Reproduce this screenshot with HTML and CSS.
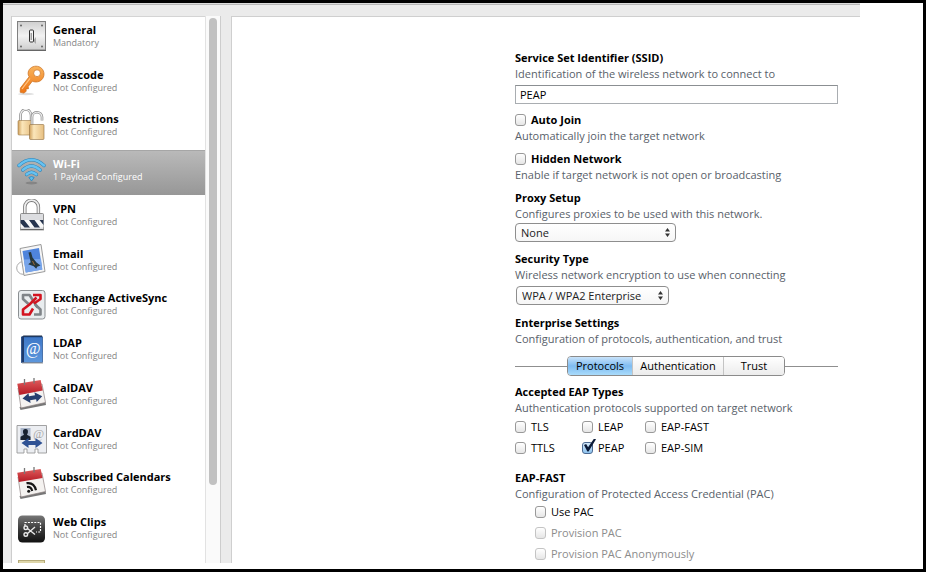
FILE: index.html
```html
<!DOCTYPE html>
<html lang="en">
<head>
<meta charset="utf-8">
<title>Wi-Fi Payload</title>
<link rel="stylesheet" href="styles.css">
</head>
<body>
<div class="window">
  <nav class="sidebar" aria-label="Payloads">
    <ul class="payloads">
      <li class="payload">
        <svg class="icon" viewBox="0 0 32 32" aria-hidden="true">
          <defs>
            <linearGradient id="steel" x1="0" y1="0" x2="0" y2="1"><stop offset="0" stop-color="#cfcfcf"/><stop offset=".5" stop-color="#f2f2f2"/><stop offset="1" stop-color="#cdcdcd"/></linearGradient>
            <linearGradient id="orange" x1="0" y1="0" x2="0" y2="1"><stop offset="0" stop-color="#f9b45c"/><stop offset="1" stop-color="#ee7414"/></linearGradient>
            <linearGradient id="brass" x1="0" y1="0" x2="1" y2="0"><stop offset="0" stop-color="#cfa05c"/><stop offset=".3" stop-color="#fbe6ba"/><stop offset="1" stop-color="#e6be80"/></linearGradient>
            <linearGradient id="red" x1="0" y1="0" x2="0" y2="1"><stop offset="0" stop-color="#de5a5a"/><stop offset="1" stop-color="#b51a25"/></linearGradient>
            <linearGradient id="book" x1="0" y1="0" x2="0" y2="1"><stop offset="0" stop-color="#3e78c8"/><stop offset="1" stop-color="#5d97dc"/></linearGradient>
            <linearGradient id="coal" x1="0" y1="0" x2="0" y2="1"><stop offset="0" stop-color="#777"/><stop offset=".5" stop-color="#3a3a3a"/><stop offset="1" stop-color="#111"/></linearGradient>
          </defs>
          <rect x="1.5" y="1.5" width="28" height="28.500" fill="url(#steel)" stroke="#808080"/>
          <path d="M1 30.500h29" stroke="#666"/>
          <g fill="#666"><circle cx="5" cy="5.500" r="1"/><circle cx="26" cy="5.500" r="1"/><circle cx="5" cy="26.500" r="1"/><circle cx="26" cy="26.500" r="1"/></g>
          <path d="M17 21l3 3v-7z" fill="#aaa"/>
          <rect x="13.500" y="10" width="4" height="12" rx="1" fill="#f4f4f4" stroke="#333"/>
          <path d="M15.200 13v7" stroke="#777"/>
        </svg>
        <span class="text"><b>General</b><small>Mandatory</small></span>
      </li>
      <li class="payload">
        <svg class="icon" viewBox="0 0 32 32" aria-hidden="true">
          <ellipse cx="10" cy="29" rx="8" ry="1.200" fill="#ddd"/>
          <path fill-rule="evenodd" d="M20 1.200c4.500 0 8 3.300 8 7.800s-3.500 8-8 8c-1.500 0-2.700-.3-3.700-.8l-4.100 5.300.3 2.200-2.500.2.200 2.400-2.300 1.800-3.700-.8.200-4.300 8.700-11.200c-.7-1.200-1-2.200-1-3.300 0-4.200 3.600-7.300 7.900-7.300zm1 3.600a3.400 3.400 0 1 0 .1 6.800 3.400 3.400 0 0 0-.1-6.800z" fill="url(#orange)" stroke="#c96b1a" stroke-width=".7"/>
          <path d="M6 24l8-10.500" stroke="#ffc68a" stroke-width="1.200"/>
        </svg>
        <span class="text"><b>Passcode</b><small>Not Configured</small></span>
      </li>
      <li class="payload">
        <svg class="icon" viewBox="0 0 32 32" aria-hidden="true">
          <path d="M4.500 12V6.500a5.300 6 0 0 1 10.600 0V12" fill="none" stroke="#8a8a8a" stroke-width="2.600"/>
          <path d="M4.500 12V6.500a5.300 6 0 0 1 10.600 0V12" fill="none" stroke="#eee" stroke-width="1.200"/>
          <rect x="2" y="11.500" width="14" height="14.500" rx="1" fill="url(#brass)" stroke="#9c7a48" stroke-width=".6"/>
          <path d="M16 16V8.500a5 5 0 0 1 10-.5v3.500" fill="none" stroke="#8a8a8a" stroke-width="2.600"/>
          <path d="M16 16V8.500a5 5 0 0 1 10-.5v3.500" fill="none" stroke="#eee" stroke-width="1.200"/>
          <rect x="13.500" y="15.500" width="14.500" height="15" rx="1" fill="url(#brass)" stroke="#8d6c3e" stroke-width=".6"/>
        </svg>
        <span class="text"><b>Restrictions</b><small>Not Configured</small></span>
      </li>
      <li class="payload selected" aria-current="true">
        <svg class="icon" viewBox="0 0 32 32" aria-hidden="true">
          <ellipse cx="15.500" cy="29" rx="6" ry="1.500" fill="#858585"/>
          <g fill="none" stroke="#2a83b8" stroke-width="3.400" stroke-linecap="round"><path d="M3 11.500Q15.500 0 28 11.500"/><path d="M6.800 16Q15.500 8 24.200 16"/><path d="M10.600 20.500Q15.500 16 20.400 20.500"/></g>
          <g fill="none" stroke="#66c2f2" stroke-width="2.400" stroke-linecap="round"><path d="M3 11.500Q15.500 0 28 11.500"/><path d="M6.800 16Q15.500 8 24.200 16"/><path d="M10.600 20.500Q15.500 16 20.400 20.500"/></g>
          <path d="M12.800 23.500Q15.500 21.500 18.200 23.500L15.500 27z" fill="#5cbdf0" stroke="#2a83b8" stroke-width=".8"/>
        </svg>
        <span class="text"><b>Wi-Fi</b><small>1 Payload Configured</small></span>
      </li>
      <li class="payload">
        <svg class="icon" viewBox="0 0 32 32" aria-hidden="true">
          <path d="M8.800 15V8a6.800 6.800 0 0 1 13.600 0v7" fill="none" stroke="#777" stroke-width="3.400"/>
          <path d="M8.800 15V8a6.800 6.800 0 0 1 13.600 0v7" fill="none" stroke="#eee" stroke-width="1.800"/>
          <rect x="4.500" y="14.500" width="23" height="16" rx="1" fill="#dcdde0" stroke="#777" stroke-width=".8"/>
          <rect x="4.500" y="21" width="23" height="7.500" fill="#f8f8f8"/>
          <path d="M4.500 21h3.500l6 7.500H8.500l-4-4.500zM13 21h5.500l5.500 7.500h-5.500zM23.500 21h4v5z" fill="#26344e"/>
          <path d="M4 30.800h24" stroke="#444" stroke-width=".8"/>
        </svg>
        <span class="text"><b>VPN</b><small>Not Configured</small></span>
      </li>
      <li class="payload">
        <svg class="icon" viewBox="0 0 32 32" aria-hidden="true">
          <circle cx="7" cy="24" r="6.300" fill="none" stroke="#aaa"/>
          <path d="M4 4.500L25 .5 29 27.500 8 31.500z" fill="#f6f6f6" stroke="#9a9a9a"/>
          <path d="M6.500 7L23 4l3.300 21.500L9.800 28.500z" fill="#4f84dc"/>
          <path d="M7.800 15.500L25 15l1.300 10.500L9.800 28.500z" fill="#78a5ea"/>
          <path d="M12.500 8.500l2.500-.5 1.500 5.500 4 5 4 3-3.300 1.200-1 2-2.500-2.500-5.500-2 2.500-2z" fill="#26373c"/>
          <path d="M16.500 17l2 4" stroke="#a06a35"/>
        </svg>
        <span class="text"><b>Email</b><small>Not Configured</small></span>
      </li>
      <li class="payload">
        <svg class="icon" viewBox="0 0 32 32" aria-hidden="true">
          <rect x="2.500" y="2.500" width="26.500" height="28.500" rx="2.500" fill="#e9edef" stroke="#8b8f92"/>
          <g fill="none" stroke-width="2.600" stroke-linejoin="round">
            <path d="M12.500 16L7 11V7h6.500l8 12.500" stroke="#7f8488"/>
            <path d="M19 16.500l5.500 5v5H18" stroke="#7f8488"/>
            <path d="M17 7h7.500v4L18 15.500" stroke="#d31420"/>
            <path d="M20.500 9.500l-7 7-6.500 5v5h6.500l3.500-6" stroke="#d31420"/>
          </g>
        </svg>
        <span class="text"><b>Exchange ActiveSync</b><small>Not Configured</small></span>
      </li>
      <li class="payload">
        <svg class="icon" viewBox="0 0 32 32" aria-hidden="true">
          <path d="M5.500 4l2-1.500h18.500l.5 2z" fill="#1d2d48"/>
          <rect x="5.500" y="4" width="21" height="25.500" fill="url(#book)" stroke="#24508f" stroke-width=".7"/>
          <rect x="5.500" y="4" width="2.500" height="25.500" fill="#1e3b6d"/>
          <path d="M6 30h21" stroke="#999"/>
          <text class="at" x="17" y="21" text-anchor="middle" font-size="16" fill="#fff">@</text>
        </svg>
        <span class="text"><b>LDAP</b><small>Not Configured</small></span>
      </li>
      <li class="payload">
        <svg class="icon" viewBox="0 0 32 32" aria-hidden="true">
          <path d="M3.500 29l26-5 .5 3-25.500 5z" fill="#777"/>
          <path d="M2 10l24-4 3.500 18.500L5 30z" fill="#f4f2f0" stroke="#8b8080" stroke-width=".7"/>
          <path d="M1.300 5.800L24.700 2l2 10.500L3.300 17z" fill="url(#red)"/>
          <path d="M8.500 1v6M18 0v5.500" stroke="#777" stroke-width="1.300"/>
          <path d="M6.500 20.500l6-5.300.5 3 6-1-.6-3 7.800 4-5.500 5.800-.6-2.800-6 1 .5 2.900z" fill="#263f6f"/>
        </svg>
        <span class="text"><b>CalDAV</b><small>Not Configured</small></span>
      </li>
      <li class="payload">
        <svg class="icon" viewBox="0 0 32 32" aria-hidden="true">
          <path d="M1 2.500h29.500V30H22v-4h-3v4h-8v-4H8v4H1z" fill="#eceef2" stroke="#999" stroke-width=".9"/>
          <rect x="4.500" y="5" width="10" height="12" fill="#aab6ca"/>
          <path d="M9.500 6c2 0 2.600 1.300 2.400 3-.1 1.400-.6 2-.9 2.700l3.500 2V17h-10v-3.300l3.500-2c-.4-.8-.9-1.300-1-2.700-.1-1.700.5-3 2.500-3z" fill="#16202f"/>
          <text class="at" x="22.500" y="14.500" text-anchor="middle" font-size="12" fill="#a8a8a8">@</text>
          <path d="M5.500 20l7-5v3h7v-3l7 5-7 5v-3h-7v3z" fill="#2f5294"/>
        </svg>
        <span class="text"><b>CardDAV</b><small>Not Configured</small></span>
      </li>
      <li class="payload">
        <svg class="icon" viewBox="0 0 32 32" aria-hidden="true">
          <path d="M3.500 29l26-5 .5 3-25.500 5z" fill="#777"/>
          <path d="M2 10l24-4 3.500 18.500L5 30z" fill="#f4f2f0" stroke="#8b8080" stroke-width=".7"/>
          <path d="M1.300 5.800L24.700 2l1.800 9L2.900 15z" fill="url(#red)"/>
          <path d="M8.500 1v6M18 0v5.500" stroke="#777" stroke-width="1.300"/>
          <g fill="none" stroke="#161616" stroke-width="2.200"><path d="M10.500 16.200q7.500-1.200 9.500 7"/><path d="M11 20q4-.6 5.200 4"/></g>
          <circle cx="12.700" cy="24.300" r="1.500" fill="#161616"/>
        </svg>
        <span class="text"><b>Subscribed Calendars</b><small>Not Configured</small></span>
      </li>
      <li class="payload">
        <svg class="icon" viewBox="0 0 32 32" aria-hidden="true">
          <rect x="2" y="3.500" width="27" height="27" rx="4.500" fill="url(#coal)"/>
          <path d="M9 14v-3.500h15.500V20H20" fill="none" stroke="#fff" stroke-width="1.200" stroke-dasharray="2 1.200"/>
          <g fill="none" stroke="#e8e8e8" stroke-width="1.400"><path d="M11.500 21.500L19 15M11.500 16.500L19 22.500"/><circle cx="9.800" cy="15.800" r="1.800"/><circle cx="9.800" cy="22.500" r="1.800"/></g>
        </svg>
        <span class="text"><b>Web Clips</b><small>Not Configured</small></span>
      </li>
      <li class="payload partial">
        <svg class="icon" viewBox="0 0 32 32" aria-hidden="true"><rect x="2.500" y="3.500" width="26" height="22" fill="#ddd5a9" stroke="#b5aa78"/></svg>
        <span class="text"><b>Credentials</b></span>
      </li>
    </ul>
    <div class="scrollbar"><div class="thumb"></div></div>
  </nav>

  <main class="panel">
    <form class="settings">
      <section>
        <label class="title" for="ssid">Service Set Identifier (SSID)</label>
        <p>Identification of the wireless network to connect to</p>
        <input class="field" id="ssid" type="text" value="PEAP">
      </section>
      <section>
        <label class="check title"><input type="checkbox">Auto Join</label>
        <p>Automatically join the target network</p>
      </section>
      <section>
        <label class="check title"><input type="checkbox">Hidden Network</label>
        <p>Enable if target network is not open or broadcasting</p>
      </section>
      <section>
        <label class="title" for="proxy">Proxy Setup</label>
        <p>Configures proxies to be used with this network.</p>
        <span class="popup proxy">
          <select id="proxy"><option>None</option></select>
          <svg viewBox="0 0 5 9" aria-hidden="true"><path d="M2.500 0L5 3.500H0zM2.500 9L0 5.500h5z"/></svg>
        </span>
      </section>
      <section>
        <label class="title" for="security">Security Type</label>
        <p>Wireless network encryption to use when connecting</p>
        <span class="popup security">
          <select id="security"><option>WPA / WPA2 Enterprise</option></select>
          <svg viewBox="0 0 5 9" aria-hidden="true"><path d="M2.500 0L5 3.500H0zM2.500 9L0 5.500h5z"/></svg>
        </span>
      </section>
      <section>
        <h2 class="title">Enterprise Settings</h2>
        <p>Configuration of protocols, authentication, and trust</p>
        <div class="tabs">
          <div class="segments" role="tablist">
            <button type="button" role="tab" aria-selected="true">Protocols</button>
            <button type="button" role="tab" aria-selected="false">Authentication</button>
            <button type="button" role="tab" aria-selected="false">Trust</button>
          </div>
        </div>
      </section>
      <section>
        <h2 class="title">Accepted EAP Types</h2>
        <p>Authentication protocols supported on target network</p>
        <div class="types">
          <label class="check"><input type="checkbox">TLS</label>
          <label class="check"><input type="checkbox">LEAP</label>
          <label class="check"><input type="checkbox">EAP-FAST</label>
          <label class="check"><input type="checkbox">TTLS</label>
          <label class="check"><input type="checkbox" checked>PEAP</label>
          <label class="check"><input type="checkbox">EAP-SIM</label>
        </div>
      </section>
      <section>
        <h2 class="title">EAP-FAST</h2>
        <p>Configuration of Protected Access Credential (PAC)</p>
        <div class="pac">
          <label class="check"><input type="checkbox">Use PAC</label>
          <label class="check off"><input type="checkbox" disabled>Provision PAC</label>
          <label class="check off"><input type="checkbox" disabled>Provision PAC Anonymously</label>
        </div>
      </section>
    </form>
  </main>
</div>
</body>
</html>
```
FILE: styles.css
```css
* {
  box-sizing: border-box;
}

body {
  margin: 0;
  height: 100vh;
  padding-bottom: 6px;
  border: 3px solid #000;
  background: #fff;
  color: #000;
  font: 11px/16px "Lucida Grande", "Open Sans", "Noto Sans", sans-serif;
  overflow: hidden;
}

.window {
  display: flex;
  gap: 10px;
  height: 100%;
  margin-right: 63px;
  padding: 12px 0 0 8px;
  background: #ebebeb;
  border-top: 1px solid #dcdcdc;
  box-shadow: inset 0 1px #b8b8b8;
}

/* Payload list */

.sidebar {
  flex: 0 0 210px;
  display: flex;
  min-height: 0;
  background: #fff;
  border: 1px solid #cdcdcd;
  border-width: 0 1px;
  box-shadow: inset 0 1px #d4d4d4;
}

.payloads {
  flex: 1;
  display: flex;
  flex-direction: column;
  margin: 0;
  padding: 0;
  list-style: none;
  overflow: hidden;
}

.payload {
  flex: 1;
  display: flex;
  align-items: center;
  gap: 5px;
  min-height: 0;
  padding: 0 4px 5px;
}

.payload.selected {
  background: linear-gradient(#bababa, #979797);
  box-shadow: inset 0 1px #a6a6a6;
  color: #fff;
}

.payload.partial {
  flex: 0 0 10px;
  align-items: flex-start;
  padding: 4px 4px 0;
}

.icon {
  flex: none;
  width: 32px;
  height: 32px;
}

.at {
  font-family: "Liberation Serif", serif;
  font-style: italic;
}

.text {
  display: flex;
  flex-direction: column;
}

.text b {
  line-height: 14px;
}

.partial b {
  padding-top: 3px;
}

.text small {
  color: #858585;
  font-size: 9px;
  line-height: 12px;
}

.selected small {
  color: #fff;
}

.scrollbar {
  flex: 0 0 14px;
  padding: 2px 3px;
  background: #fafafa;
  border-left: 1px solid #e2e2e2;
}

.thumb {
  height: 86%;
  width: 8px;
  border-radius: 4px;
  background: #c1c1c1;
}

/* Settings form */

.panel {
  flex: 1;
  display: flex;
  justify-content: flex-end;
  padding: 33px 22px 0 0;
  background: #fff;
  border: 1px solid #cfcfcf;
  border-width: 1px 0 0 1px;
}

.settings {
  width: 323px;
  display: flex;
  flex-direction: column;
  gap: 8px;
}

.title {
  display: block;
  margin: 0;
  font-size: 11px;
  line-height: 16px;
  font-weight: 700;
}

p {
  margin: 0;
  color: #59616a;
  line-height: 15px;
}

.field {
  display: block;
  width: 100%;
  height: 19px;
  margin-top: 4px;
  padding: 0 4px;
  border: 1px solid #a9adb1;
  border-top-color: #8b8f92;
  background: #fff;
  color: #000;
  font: inherit;
}

.check {
  display: flex;
  align-items: center;
  gap: 5px;
}

.check input {
  appearance: none;
  position: relative;
  flex: none;
  width: 11px;
  height: 12px;
  margin: 0;
  border: 1px solid #999;
  border-radius: 3px;
  background: linear-gradient(#fff, #e6e6e6);
}

.check input:checked {
  border-color: #4c6a92;
  background: linear-gradient(#d5e9fa, #8ec3ef);
}

.check input:checked::after {
  content: "";
  position: absolute;
  left: 1px;
  top: -4px;
  width: 12px;
  height: 13px;
  background: #0c1b38;
  clip-path: polygon(0 50%, 18% 42%, 34% 68%, 84% 0, 100% 6%, 38% 100%, 28% 100%);
}

.off {
  color: #8c8c8c;
}

.off input {
  border-color: #c4c4c4;
}

.popup {
  display: grid;
  align-items: center;
  height: 19px;
  margin-top: 2px;
}

.popup > * {
  grid-area: 1 / 1;
}

.popup select {
  appearance: none;
  width: 100%;
  height: 19px;
  padding: 0 5px;
  border: 1px solid #8e8e8e;
  border-radius: 4px;
  background: linear-gradient(#fff, #f6f6f6);
  color: #222;
  font: inherit;
}

.popup svg {
  justify-self: end;
  width: 5px;
  height: 9px;
  margin-right: 6px;
  fill: #333;
  pointer-events: none;
}

.proxy {
  width: 161px;
  margin-bottom: 1px;
}

.security {
  width: 153px;
  margin: 4px 0 2px 1px;
}

.tabs {
  display: flex;
  align-items: center;
  margin-top: 10px;
}

.tabs::before,
.tabs::after {
  content: "";
  flex: 1;
  height: 1px;
  background: #8f8f8f;
}

.tabs::before {
  flex: 0 0 52px;
}

.segments {
  display: grid;
  grid-template-columns: 64px 91px 61px;
  height: 20px;
  border: 1px solid #8b8b8b;
  border-radius: 4px;
  overflow: hidden;
}

.segments button {
  padding: 0;
  border: 0;
  border-left: 1px solid #c4c4c4;
  background: linear-gradient(#fff, #ececec);
  color: #000;
  font: inherit;
}

.segments button:first-child {
  border-left: 0;
}

.segments button[aria-selected="true"] {
  background: linear-gradient(#c9e3fa, #7fbcf1 50%, #a9dbfb);
}

.types {
  display: grid;
  grid-template-columns: 67px 63px 1fr;
  grid-auto-rows: 21px;
  margin: 1px 0 4px;
}

.pac {
  display: grid;
  grid-auto-rows: 21px;
  padding-left: 20px;
}
```
